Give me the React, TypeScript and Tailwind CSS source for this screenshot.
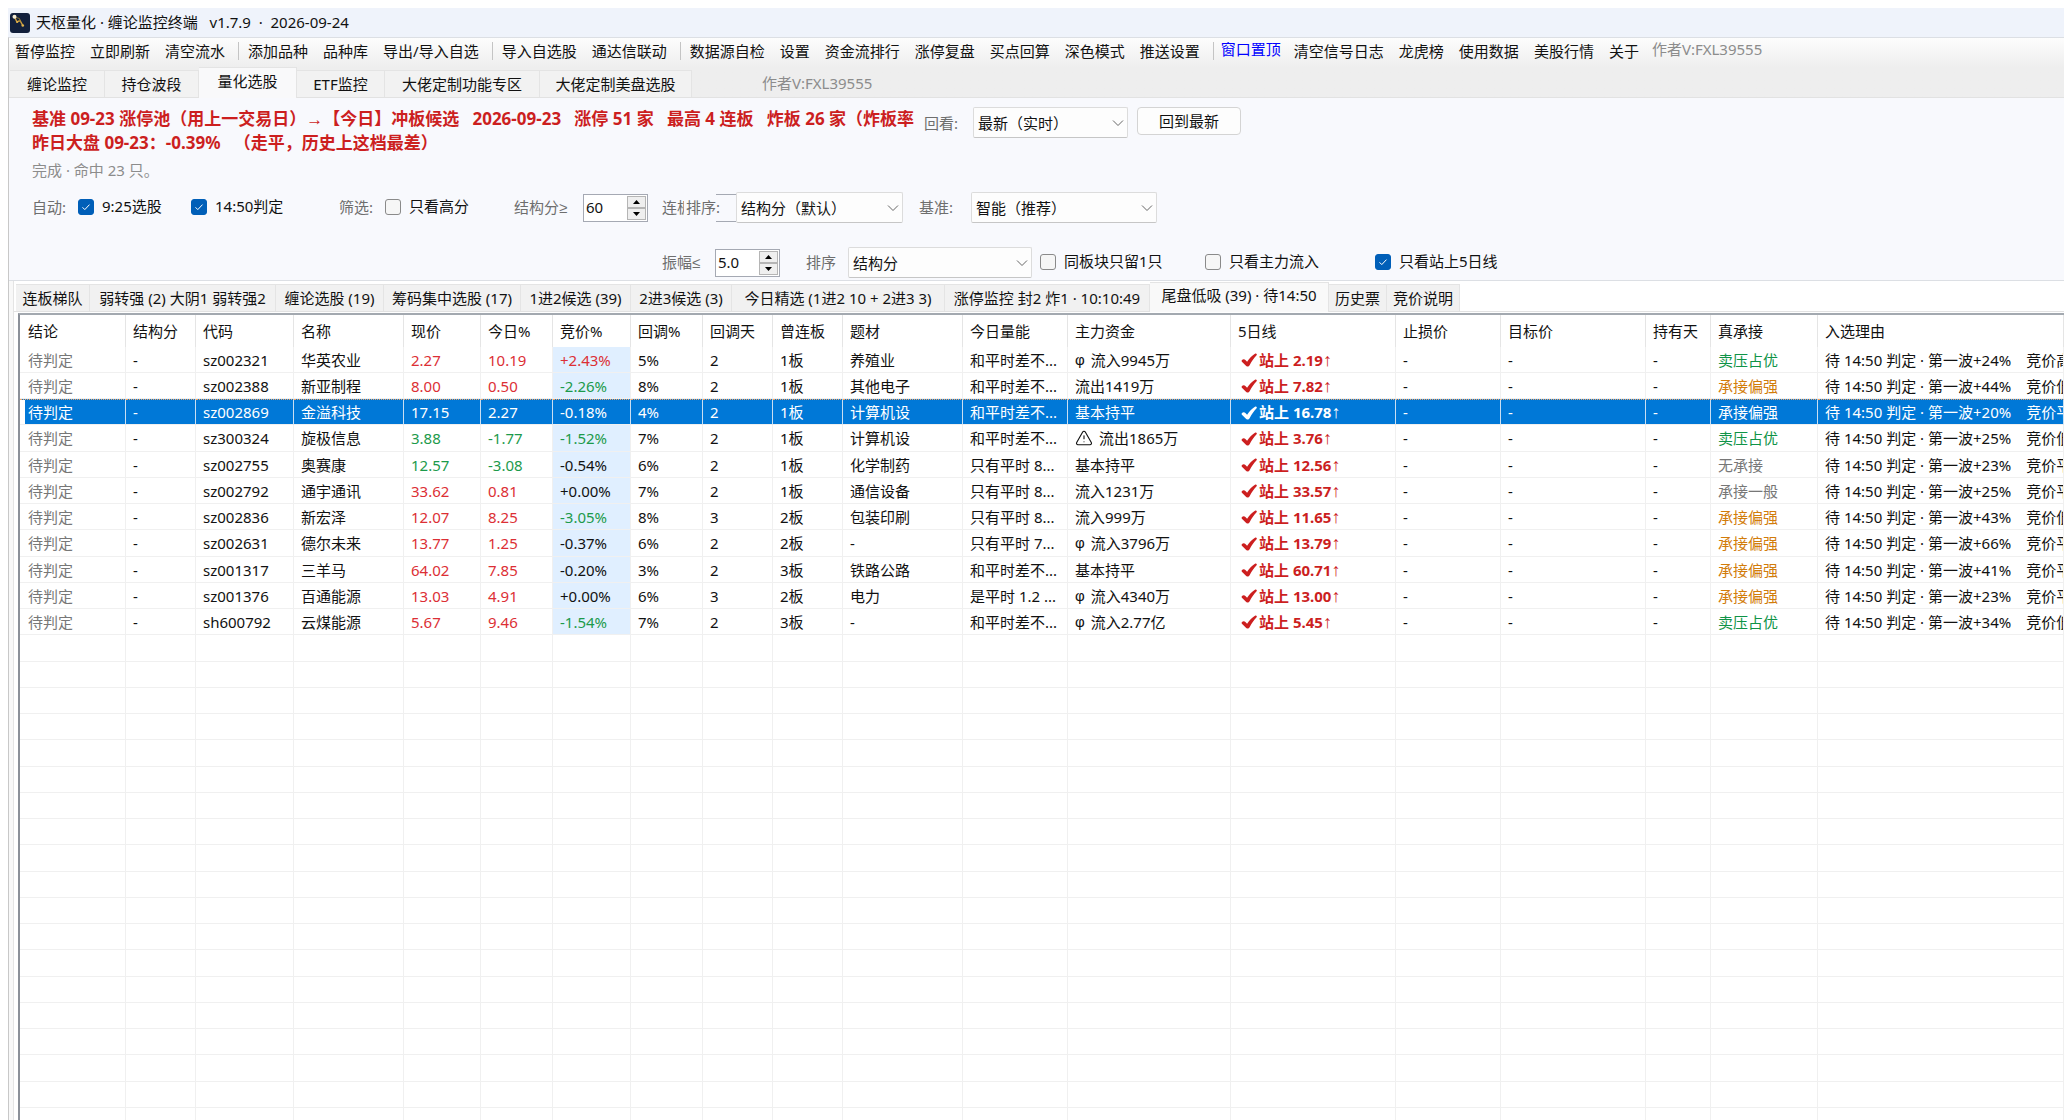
import React, { ReactNode, useState } from "react";
import { TriangleAlert } from "lucide-react";
import clsx from "clsx";

type Stock = {
  code: string;
  name: string;
  price: string;
  today: string;
  auction: string;
  pullback: string;
  days: string;
  boards: string;
  theme: string;
  volume: string;
  fund: string;
  mark?: "phi" | "warn";
  ma5: string;
  support: string;
  wave: string;
  open: string;
};

const toolbar = [
  ["暂停监控", "立即刷新", "清空流水"],
  ["添加品种", "品种库", "导出/导入自选"],
  ["导入自选股", "通达信联动"],
  ["数据源自检", "设置", "资金流排行", "涨停复盘", "买点回算", "深色模式", "推送设置"],
];

const toolbarEnd = ["清空信号日志", "龙虎榜", "使用数据", "美股行情", "关于"];

const mainTabs = [
  { label: "缠论监控", width: "w-[95px]" },
  { label: "持仓波段", width: "w-[94px]" },
  { label: "量化选股", width: "w-[98px]" },
  { label: "ETF监控", width: "w-[88px]" },
  { label: "大佬定制功能专区", width: "w-[155px]" },
  { label: "大佬定制美盘选股", width: "w-[152px]" },
];

const subTabs = [
  { label: "连板梯队", width: "w-[74px]" },
  { label: "弱转强 (2) 大阴1 弱转强2", width: "w-[186px]" },
  { label: "缠论选股 (19)", width: "w-[108px]" },
  { label: "筹码集中选股 (17)", width: "w-[137px]" },
  { label: "1进2候选 (39)", width: "w-[110px]" },
  { label: "2进3候选 (3)", width: "w-[101px]" },
  { label: "今日精选 (1进2 10 + 2进3 3)", width: "w-[213px]" },
  { label: "涨停监控 封2 炸1 · 10:10:49", width: "w-[205px]" },
  { label: "尾盘低吸 (39) · 待14:50", width: "w-[179px]" },
  { label: "历史票", width: "w-[58px]" },
  { label: "竞价说明", width: "w-[73px]" },
];

const columns = [
  { label: "结论", width: "w-[106px]" },
  { label: "结构分", width: "w-[70px]" },
  { label: "代码", width: "w-[98px]" },
  { label: "名称", width: "w-[110px]" },
  { label: "现价", width: "w-[77px]" },
  { label: "今日%", width: "w-[72px]" },
  { label: "竞价%", width: "w-[78px]" },
  { label: "回调%", width: "w-[72px]" },
  { label: "回调天", width: "w-[70px]" },
  { label: "曾连板", width: "w-[70px]" },
  { label: "题材", width: "w-[120px]" },
  { label: "今日量能", width: "w-[105px]" },
  { label: "主力资金", width: "w-[163px]" },
  { label: "5日线", width: "w-[165px]" },
  { label: "止损价", width: "w-[105px]" },
  { label: "目标价", width: "w-[145px]" },
  { label: "持有天", width: "w-[65px]" },
  { label: "真承接", width: "w-[107px]" },
  { label: "入选理由", width: "w-auto" },
];

const stocks: Stock[] = [
  { code: "sz002321", name: "华英农业", price: "2.27", today: "10.19", auction: "+2.43%", pullback: "5%", days: "2", boards: "1板", theme: "养殖业", volume: "和平时差不...", fund: "流入9945万", mark: "phi", ma5: "2.19", support: "卖压占优", wave: "+24%", open: "竞价高" },
  { code: "sz002388", name: "新亚制程", price: "8.00", today: "0.50", auction: "-2.26%", pullback: "8%", days: "2", boards: "1板", theme: "其他电子", volume: "和平时差不...", fund: "流出1419万", ma5: "7.82", support: "承接偏强", wave: "+44%", open: "竞价低" },
  { code: "sz002869", name: "金溢科技", price: "17.15", today: "2.27", auction: "-0.18%", pullback: "4%", days: "2", boards: "1板", theme: "计算机设", volume: "和平时差不...", fund: "基本持平", ma5: "16.78", support: "承接偏强", wave: "+20%", open: "竞价平" },
  { code: "sz300324", name: "旋极信息", price: "3.88", today: "-1.77", auction: "-1.52%", pullback: "7%", days: "2", boards: "1板", theme: "计算机设", volume: "和平时差不...", fund: "流出1865万", mark: "warn", ma5: "3.76", support: "卖压占优", wave: "+25%", open: "竞价低" },
  { code: "sz002755", name: "奥赛康", price: "12.57", today: "-3.08", auction: "-0.54%", pullback: "6%", days: "2", boards: "1板", theme: "化学制药", volume: "只有平时 8...", fund: "基本持平", ma5: "12.56", support: "无承接", wave: "+23%", open: "竞价平" },
  { code: "sz002792", name: "通宇通讯", price: "33.62", today: "0.81", auction: "+0.00%", pullback: "7%", days: "2", boards: "1板", theme: "通信设备", volume: "只有平时 8...", fund: "流入1231万", ma5: "33.57", support: "承接一般", wave: "+25%", open: "竞价平" },
  { code: "sz002836", name: "新宏泽", price: "12.07", today: "8.25", auction: "-3.05%", pullback: "8%", days: "3", boards: "2板", theme: "包装印刷", volume: "只有平时 8...", fund: "流入999万", ma5: "11.65", support: "承接偏强", wave: "+43%", open: "竞价低" },
  { code: "sz002631", name: "德尔未来", price: "13.77", today: "1.25", auction: "-0.37%", pullback: "6%", days: "2", boards: "2板", theme: "-", volume: "只有平时 7...", fund: "流入3796万", mark: "phi", ma5: "13.79", support: "承接偏强", wave: "+66%", open: "竞价平" },
  { code: "sz001317", name: "三羊马", price: "64.02", today: "7.85", auction: "-0.20%", pullback: "3%", days: "2", boards: "3板", theme: "铁路公路", volume: "和平时差不...", fund: "基本持平", ma5: "60.71", support: "承接偏强", wave: "+41%", open: "竞价平" },
  { code: "sz001376", name: "百通能源", price: "13.03", today: "4.91", auction: "+0.00%", pullback: "6%", days: "3", boards: "2板", theme: "电力", volume: "是平时 1.2 ...", fund: "流入4340万", mark: "phi", ma5: "13.00", support: "承接偏强", wave: "+23%", open: "竞价平" },
  { code: "sh600792", name: "云煤能源", price: "5.67", today: "9.46", auction: "-1.54%", pullback: "7%", days: "2", boards: "3板", theme: "-", volume: "和平时差不...", fund: "流入2.77亿", mark: "phi", ma5: "5.45", support: "卖压占优", wave: "+34%", open: "竞价低" },
];

const emptyRows = Array.from({ length: 20 }, (_, i) => i);

const supportColor: Record<string, string> = {
  卖压占优: "text-[#0f9347]",
  承接偏强: "text-[#d27c0a]",
  无承接: "text-[#777777]",
  承接一般: "text-[#777777]",
};

const priceColor = (value: string) =>
  value.startsWith("-") ? "text-[#1c9a4b]" : "text-[#dc2f35]";

// moves under 1% stay neutral
const auctionColor = (value: string) => {
  const n = parseFloat(value);
  if (n >= 1) return "text-[#dc2f35]";
  if (n <= -1) return "text-[#1c9a4b]";
  return "text-[#111111]";
};

const Separator = () => <span className="ml-1 h-[18px] w-px bg-[#c4c4c4]" />;

const ToolButton = ({ label }: { label: string }) => (
  <button type="button" className="px-1.5 leading-[22px]">
    {label}
  </button>
);

const Logo = () => (
  <svg width="20" height="20" viewBox="0 0 20 20">
    <rect width="20" height="20" rx="3" fill="#13203c" />
    <path d="M4.5 4 7 9l3-1.500 2.500 4.500" fill="none" stroke="#c79a3c" strokeWidth="1.500" />
    <path d="m4.500 4 5 1.500.5 3" fill="none" stroke="#8d7436" strokeWidth="1" />
    <circle cx="4.500" cy="3.800" r="2" fill="#f3ead2" />
    <circle cx="7.200" cy="9" r="1" fill="#e3b54e" />
    <circle cx="12.800" cy="12.500" r="1.300" fill="#e3b54e" />
  </svg>
);

const Tick = () => (
  <svg width="17" height="15" viewBox="0 0 17 15" fill="currentColor" className="shrink-0">
    <path d="M.8 8.200c1-1.300 2.600-1.400 3.600-.3l1.700 1.900C8.400 6.300 11.200 3.300 14 1.700c1.200-.6 2.400.5 1.600 1.600-2.800 2.900-5.100 6.200-7 9.900-.8 1.500-3 1.600-3.900.3L.9 9.700c-.4-.5-.5-1-.1-1.500Z" />
  </svg>
);

const Check = ({ label, checked = false }: { label: string; checked?: boolean }) => (
  <label className="flex items-center gap-2 pb-0.5 whitespace-nowrap text-[#111111]">
    <span className="relative flex size-4">
      <input
        type="checkbox"
        defaultChecked={checked}
        className="peer size-4 appearance-none rounded-[3px] border border-[#8a8a8a] bg-[#f6f6f6] checked:border-[#005fb8] checked:bg-[#005fb8]"
      />
      <svg
        viewBox="0 0 16 16"
        className="pointer-events-none absolute inset-0 hidden fill-none stroke-white peer-checked:block"
      >
        <path d="m4.500 8.300 2.300 2.300 4.700-5" />
      </svg>
    </span>
    {label}
  </label>
);

const Dropdown = ({ id, width, value }: { id: string; width: string; value: string }) => (
  <span className={clsx("relative flex h-[31px]", width)}>
    <select
      id={id}
      className="w-full appearance-none rounded-[2px] border border-[#dcdcdc] border-b-[#c6c6c6] bg-[#fdfdfd] pt-px pl-1 pr-5 text-[#111111]"
    >
      <option>{value}</option>
    </select>
    <svg
      width="12"
      height="8"
      viewBox="0 0 12 8"
      className="pointer-events-none absolute right-1 top-3 fill-none stroke-[#666666]"
    >
      <path d="m1 1.500 5 5 5-5" />
    </svg>
  </span>
);

const Spin = ({ id, value }: { id: string; value: string }) => (
  <span className="flex h-7 w-[65px] border border-[#a5a9b3] bg-white p-px">
    <input id={id} defaultValue={value} className="w-[42px] pl-px text-[#111111] outline-none" />
    <span className="flex flex-1 flex-col">
      <button
        type="button"
        aria-label="增加"
        className="flex flex-1 items-center justify-center border border-[#b5b5b5] bg-[#efefef]"
      >
        <svg width="7" height="4" viewBox="0 0 7 4">
          <path d="M0 4 3.500 0 7 4Z" />
        </svg>
      </button>
      <button
        type="button"
        aria-label="减少"
        className="flex flex-1 items-center justify-center border border-[#b5b5b5] bg-[#efefef]"
      >
        <svg width="7" height="4" viewBox="0 0 7 4">
          <path d="M0 0h7L3.500 4Z" />
        </svg>
      </button>
    </span>
  </span>
);

const Cell = ({
  children,
  className,
  selected = false,
}: {
  children?: ReactNode;
  className?: string;
  selected?: boolean;
}) => (
  <td
    className={clsx(
      "overflow-hidden border-b border-r border-b-[#f0f0f0] p-0 pl-[7px] leading-6 whitespace-nowrap",
      selected
        ? "border-t border-r-[#c9def2] border-t-[#f0a66a] bg-[#0078d7] text-white [border-top-style:dotted]"
        : "border-r-[#f0f0f0]",
      !selected && className
    )}
  >
    {children}
  </td>
);

const StockRow = ({
  stock,
  selected,
  onSelect,
}: {
  stock: Stock;
  selected: boolean;
  onSelect: () => void;
}) => (
  <tr
    onClick={onSelect}
    className={clsx(
      "h-[26px] nth-[4n]:h-[27px] [&>td:first-child]:pl-2",
      selected && "[&>td:first-child]:shadow-[inset_5px_0_0_#ffffff]"
    )}
  >
    <Cell selected={selected} className="text-[#777777]">待判定</Cell>
    <Cell selected={selected}>-</Cell>
    <Cell selected={selected}>{stock.code}</Cell>
    <Cell selected={selected}>{stock.name}</Cell>
    <Cell selected={selected} className={priceColor(stock.today)}>{stock.price}</Cell>
    <Cell selected={selected} className={priceColor(stock.today)}>{stock.today}</Cell>
    <Cell selected={selected} className={clsx("bg-[#e0efff]", auctionColor(stock.auction))}>
      {stock.auction}
    </Cell>
    <Cell selected={selected}>{stock.pullback}</Cell>
    <Cell selected={selected}>{stock.days}</Cell>
    <Cell selected={selected}>{stock.boards}</Cell>
    <Cell selected={selected}>{stock.theme}</Cell>
    <Cell selected={selected}>{stock.volume}</Cell>
    <Cell selected={selected}>
      <span className="flex items-center gap-1.5">
        {stock.mark === "phi" && <span className="font-['Liberation_Sans']">φ</span>}
        {stock.mark === "warn" && <TriangleAlert size={18} strokeWidth={1.5} />}
        {stock.fund}
      </span>
    </Cell>
    <Cell selected={selected} className="text-[#cc1f1f]">
      <span className="flex items-center gap-px pl-[3px] font-bold">
        <Tick />
        <span>
          站上 {stock.ma5}
          <span className="font-['Liberation_Sans'] text-lg leading-4 font-normal">↑</span>
        </span>
      </span>
    </Cell>
    <Cell selected={selected}>-</Cell>
    <Cell selected={selected}>-</Cell>
    <Cell selected={selected}>-</Cell>
    <Cell selected={selected} className={supportColor[stock.support]}>{stock.support}</Cell>
    <Cell selected={selected}>
      待 14:50 判定 · 第一波{stock.wave}&ensp;&ensp;{stock.open}
    </Cell>
  </tr>
);

const App = () => {
  const [mainTab, setMainTab] = useState<string>("量化选股");
  const [subTab, setSubTab] = useState<string>("尾盘低吸 (39) · 待14:50");
  const [selected, setSelected] = useState<string>("sz002869");

  return (
    <div className="flex h-screen flex-col overflow-hidden bg-white pl-2 pt-2 font-['Noto_Sans','Liberation_Sans','Noto_Sans_CJK_SC',sans-serif] text-[15px] text-[#111111]">
      {/* title bar */}
      <header className="flex h-[29px] shrink-0 items-center gap-1.5 bg-[#eff3fb] pl-0.5">
        <Logo />
        <h1 className="whitespace-pre">天枢量化 · 缠论监控终端   v1.7.9  ·  2026-09-24</h1>
      </header>

      <div className="flex min-h-0 flex-1 flex-col border-l border-t border-l-[#c8c8c8] border-t-[#dcdfe4]">
        {/* toolbar and main tabs */}
        <div className="shrink-0 bg-linear-to-b from-[#fdfdfd] to-[#eeeeee] to-50%">
          <nav className="flex h-[26px] items-center gap-[3px] whitespace-nowrap">
            {toolbar.map((group) => (
              <React.Fragment key={group[0]}>
                {group.map((label) => (
                  <ToolButton key={label} label={label} />
                ))}
                <Separator />
              </React.Fragment>
            ))}
            <button type="button" className="self-start px-1 leading-[22px] text-[#0000ff]">
              窗口置顶
            </button>
            {toolbarEnd.map((label) => (
              <ToolButton key={label} label={label} />
            ))}
            <span className="self-start px-1 leading-[22px] text-[#8c8c8c]">作者V:FXL39555</span>
          </nav>
          <div className="flex h-[34px] items-end border-b border-[#e2e2e2] pl-px whitespace-nowrap">
            {mainTabs.map(({ label, width }) => (
              <button
                key={label}
                type="button"
                onClick={() => setMainTab(label)}
                className={clsx(
                  "shrink-0 border-r border-t border-[#e4e4e4]",
                  width,
                  mainTab === label
                    ? "-mb-px h-[31px] bg-[#f9f9fa] pb-1"
                    : "h-[27px] bg-[#f2f2f2]"
                )}
              >
                {label}
              </button>
            ))}
            <span className="pl-[70px] leading-[27px] text-[#8c8c8c]">作者V:FXL39555</span>
          </div>
        </div>

        {/* filters */}
        <section className="shrink-0 border-b border-[#dcdfe4] bg-[#f8f9fd] pb-0.5 pl-[23px]">
          <div className="flex items-start pt-[9px]">
            <div className="w-[884px] shrink-0 overflow-hidden text-[17px] leading-6 font-bold whitespace-pre text-[#cc1f1f]">
              <p>
                基准 09-23 涨停池（用上一交易日）→【今日】冲板候选   2026-09-23   涨停 51 家   最高 4 连板   炸板 26 家（炸板率
              </p>
              <p>昨日大盘 09-23：-0.39%   （走平，历史上这档最差）</p>
            </div>
            <label htmlFor="review" className="w-[57px] shrink-0 pl-2 leading-8 text-[#6e6e6e]">
              回看:
            </label>
            <Dropdown id="review" width="w-[155px]" value="最新（实时）" />
            <button
              type="button"
              className="ml-[9px] h-7 w-[104px] rounded-[4px] border border-[#d4d4d4] bg-[#fdfdfd]"
            >
              回到最新
            </button>
          </div>
          <p className="pt-[3px] leading-6 text-[#8c8c8c]">完成 · 命中 23 只。</p>

          <div className="mt-2.5 flex h-[31px] items-center whitespace-nowrap text-[#6e6e6e]">
            <span className="w-[46px]">自动:</span>
            <span className="w-[113px]"><Check label="9:25选股" checked /></span>
            <span className="w-[148px]"><Check label="14:50判定" checked /></span>
            <span className="w-[46px]">筛选:</span>
            <span className="w-[129px]"><Check label="只看高分" /></span>
            <label htmlFor="score" className="w-[69px]">结构分≥</label>
            <Spin id="score" value="60" />
            <label htmlFor="boards" className="ml-3.5 mr-0.5 w-[22px] overflow-hidden">连板≥</label>
            <label htmlFor="sort" className="w-[34px]">排序:</label>
            <input
              id="boards"
              className="-ml-1 h-7 w-5 border-y border-[#a5a9b3] bg-transparent outline-none"
            />
            <Dropdown id="sort" width="w-[167px]" value="结构分（默认）" />
            <label htmlFor="base" className="ml-4 w-[52px]">基准:</label>
            <Dropdown id="base" width="w-[186px]" value="智能（推荐）" />
          </div>

          <div className="mt-6 flex h-[31px] items-center pl-[630px] whitespace-nowrap text-[#6e6e6e]">
            <label htmlFor="amplitude" className="w-[53px]">振幅≤</label>
            <Spin id="amplitude" value="5.0" />
            <label htmlFor="order" className="ml-[26px] w-[42px]">排序</label>
            <Dropdown id="order" width="w-[184px]" value="结构分" />
            <span className="ml-2 w-[165px]"><Check label="同板块只留1只" /></span>
            <span className="w-[170px]"><Check label="只看主力流入" /></span>
            <Check label="只看站上5日线" checked />
          </div>
        </section>

        {/* result lists */}
        <div className="flex min-h-0 flex-1 flex-col bg-[#f8f8f8] pl-1">
          <div className="flex min-h-0 flex-1 flex-col border-l border-[#e4e4e4] bg-white">
            <div className="flex h-[31px] shrink-0 items-end border-b border-[#e2e2e2] pl-0.5 whitespace-nowrap">
              {subTabs.map(({ label, width }) => (
                <button
                  key={label}
                  type="button"
                  onClick={() => setSubTab(label)}
                  className={clsx(
                    "flex shrink-0 items-center justify-center border-r border-t border-[#e4e4e4]",
                    width,
                    subTab === label
                      ? "-mb-px h-[30px] bg-[#f9f9f9] pb-1"
                      : "h-[27px] bg-[#f1f1f1]"
                  )}
                >
                  {label}
                </button>
              ))}
            </div>
            <div className="min-h-0 flex-1 overflow-hidden pl-1 pt-px">
              <div className="h-full overflow-hidden border-l-2 border-t-2 border-l-[#8b9099] border-t-[#a3a9b0]">
                <table className="w-full table-fixed border-separate border-spacing-0">
                  <thead>
                    <tr className="h-8 [&>th:first-child]:pl-2">
                      {columns.map(({ label, width }) => (
                        <th
                          key={label}
                          className={clsx(
                            "border-r border-[#e5e5e5] p-0 pl-[7px] text-left font-normal whitespace-nowrap",
                            width
                          )}
                        >
                          {label}
                        </th>
                      ))}
                    </tr>
                  </thead>
                  <tbody>
                    {stocks.map((stock) => (
                      <StockRow
                        key={stock.code}
                        stock={stock}
                        selected={selected === stock.code}
                        onSelect={() => setSelected(stock.code)}
                      />
                    ))}
                    {emptyRows.map((row) => (
                      <tr key={row} className="h-[26px] nth-[4n]:h-[27px]">
                        {columns.map(({ label }) => (
                          <Cell key={label} />
                        ))}
                      </tr>
                    ))}
                  </tbody>
                </table>
              </div>
            </div>
          </div>
        </div>
      </div>
    </div>
  );
};

export default App;
